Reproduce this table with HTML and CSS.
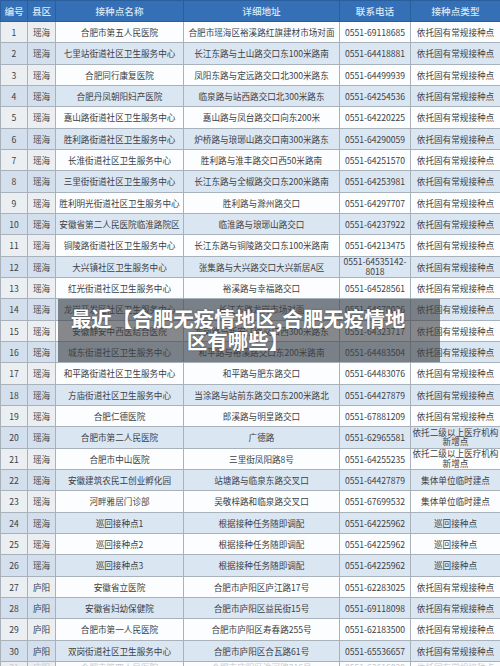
FILE: index.html
```html
<!DOCTYPE html>
<html lang="zh-CN">
<head>
<meta charset="utf-8">
<title>合肥接种点</title>
<link rel="stylesheet" href="styles.css">
</head>
<body>
<div class="page">
<table class="grid">
<colgroup>
<col class="c1"><col class="c2"><col class="c3"><col class="c4"><col class="c5"><col class="c6">
</colgroup>
<thead>
<tr><th>编号</th><th>县区</th><th>接种点名称</th><th>详细地址</th><th>联系电话</th><th>接种点类型</th></tr>
</thead>
<tbody>
<tr><td>1</td><td>瑶海</td><td>合肥市第五人民医院</td><td>合肥市瑶海区裕溪路红旗建材市场对面</td><td>0551-69118685</td><td>依托固有常规接种点</td></tr>
<tr><td>2</td><td>瑶海</td><td>七里站街道社区卫生服务中心</td><td>长江东路与土山路交口东100米路南</td><td>0551-64418881</td><td>依托固有常规接种点</td></tr>
<tr><td>3</td><td>瑶海</td><td>合肥同行康复医院</td><td>凤阳东路与定远路交口北300米路东</td><td>0551-64499939</td><td>依托固有常规接种点</td></tr>
<tr><td>4</td><td>瑶海</td><td>合肥丹凤朝阳妇产医院</td><td>临泉路与站西路交口北300米路东</td><td>0551-64254536</td><td>依托固有常规接种点</td></tr>
<tr><td>5</td><td>瑶海</td><td>嘉山路街道社区卫生服务中心</td><td>嘉山路与凤台路交口向东200米</td><td>0551-64220225</td><td>依托固有常规接种点</td></tr>
<tr><td>6</td><td>瑶海</td><td>胜利路街道社区卫生服务中心</td><td>炉桥路与琅琊山路交口南300米路东</td><td>0551-64290059</td><td>依托固有常规接种点</td></tr>
<tr><td>7</td><td>瑶海</td><td>长淮街道社区卫生服务中心</td><td>胜利路与淮丰路交口西50米路南</td><td>0551-64251570</td><td>依托固有常规接种点</td></tr>
<tr><td>8</td><td>瑶海</td><td>三里街街道社区卫生服务中心</td><td>长江东路与全椒路交口东200米路南</td><td>0551-64253981</td><td>依托固有常规接种点</td></tr>
<tr><td>9</td><td>瑶海</td><td>胜利明光街道社区卫生服务中心</td><td>胜利路与滁州路交口</td><td>0551-64297707</td><td>依托固有常规接种点</td></tr>
<tr><td>10</td><td>瑶海</td><td>安徽省第二人民医院临淮路院区</td><td>临淮路与琅琊山路交口</td><td>0551-64237922</td><td>依托固有常规接种点</td></tr>
<tr><td>11</td><td>瑶海</td><td>铜陵路街道社区卫生服务中心</td><td>长江东路与铜陵路交口东100米路南</td><td>0551-64213475</td><td>依托固有常规接种点</td></tr>
<tr><td>12</td><td>瑶海</td><td>大兴镇社区卫生服务中心</td><td>张集路与大兴路交口大兴新居A区</td><td class="wrap">0551-64535142-<br>8018</td><td>依托固有常规接种点</td></tr>
<tr><td>13</td><td>瑶海</td><td>红光街道社区卫生服务中心</td><td>裕溪路与幸福路交口</td><td>0551-64528561</td><td>依托固有常规接种点</td></tr>
<tr><td>14</td><td>瑶海</td><td>龙岗开发区社区卫生服务中心</td><td>长江东路龙岗市场对面</td><td>0551-64670026</td><td>依托固有常规接种点</td></tr>
<tr><td>15</td><td>瑶海</td><td>安徽静安中西医结合医院</td><td>龙岗路与新安江路交口西300米路东</td><td>0551-64323717</td><td>依托固有常规接种点</td></tr>
<tr><td>16</td><td>瑶海</td><td>城东街道社区卫生服务中心</td><td>和平路与裕溪路交口东200米路南</td><td>0551-64483504</td><td>依托固有常规接种点</td></tr>
<tr><td>17</td><td>瑶海</td><td>和平路街道社区卫生服务中心</td><td>和平路与肥东路交口</td><td>0551-64483076</td><td>依托固有常规接种点</td></tr>
<tr><td>18</td><td>瑶海</td><td>方庙街道社区卫生服务中心</td><td>当涂路与站前东路交口东200米路北</td><td>0551-64427879</td><td>依托固有常规接种点</td></tr>
<tr><td>19</td><td>瑶海</td><td>合肥仁德医院</td><td>郎溪路与明皇路交口</td><td>0551-67881209</td><td>依托固有常规接种点</td></tr>
<tr><td>20</td><td>瑶海</td><td>合肥市第二人民医院</td><td>广德路</td><td>0551-62965581</td><td class="wrap">依托二级以上医疗机构<br>新增点</td></tr>
<tr><td>21</td><td>瑶海</td><td>合肥市中山医院</td><td>三里街凤阳路8号</td><td>0551-64255235</td><td class="wrap">依托二级以上医疗机构<br>新增点</td></tr>
<tr><td>22</td><td>瑶海</td><td>安徽建筑农民工创业孵化园</td><td>站塘路与临泉东路交叉口</td><td>0551-64427879</td><td>集体单位临时建点</td></tr>
<tr><td>23</td><td>瑶海</td><td>河畔雅居门诊部</td><td>吴敬梓路和临泉路交叉口</td><td>0551-67699532</td><td>集体单位临时建点</td></tr>
<tr><td>24</td><td>瑶海</td><td>巡回接种点1</td><td>根据接种任务随即调配</td><td>0551-64225962</td><td>巡回接种点</td></tr>
<tr><td>25</td><td>瑶海</td><td>巡回接种点2</td><td>根据接种任务随即调配</td><td>0551-64225962</td><td>巡回接种点</td></tr>
<tr><td>26</td><td>瑶海</td><td>巡回接种点3</td><td>根据接种任务随即调配</td><td>0551-64225962</td><td>巡回接种点</td></tr>
<tr><td>27</td><td>庐阳</td><td>安徽省立医院</td><td>合肥市庐阳区庐江路17号</td><td>0551-62283025</td><td>依托固有常规接种点</td></tr>
<tr><td>28</td><td>庐阳</td><td>安徽省妇幼保健院</td><td>合肥市庐阳区益民街15号</td><td>0551-69118098</td><td>依托固有常规接种点</td></tr>
<tr><td>29</td><td>庐阳</td><td>合肥市第一人民医院</td><td>合肥市庐阳区寿春路255号</td><td>0551-62183500</td><td>依托固有常规接种点</td></tr>
<tr><td>30</td><td>庐阳</td><td>双岗街道社区卫生服务中心</td><td>合肥市庐阳区合瓦路61号</td><td>0551-65536657</td><td>依托固有常规接种点</td></tr>
<tr class="partial"><td>31</td><td>庐阳</td><td>合肥市第四人民医院</td><td>合肥市庐阳区淮河路316号</td><td>0551-63616029</td><td>依托固有常规接种点</td></tr>
</tbody>
</table>
<div class="caption">
<p class="caption-text">最近【合肥无疫情地区,合肥无疫情地<br>区有哪些】</p>
</div>
</div>
</body>
</html>
```
FILE: styles.css
```css
html, body {
  margin: 0;
  padding: 0;
  background: #ffffff;
}
body {
  width: 500px;
  height: 666px;
  overflow: hidden;
  font-family: "Noto Sans CJK SC", "Noto Sans", sans-serif;
}
.page {
  position: relative;
  width: 500px;
  height: 666px;
  overflow: hidden;
}
.grid {
  width: 500px;
  table-layout: fixed;
  border-collapse: collapse;
  color: #3b3f45;
  font-size: 8.6px;
  line-height: 10px;
}
.c1 { width: 27px; }
.c2 { width: 28px; }
.c3 { width: 128px; }
.c4 { width: 156px; }
.c5 { width: 71px; }
.c6 { width: 90px; }
.grid th {
  height: 20px;
  padding: 0;
  background: #3570b6;
  color: #d9e8f7;
  font-weight: 500;
  font-size: 9.6px;
  border: 1px solid #2a5f9e;
  text-align: center;
}
.grid td {
  height: 20.33px;
  padding: 0;
  border: 1px solid #a9b1ba;
  text-align: center;
  white-space: nowrap;
  overflow: hidden;
  background: #fcfdfe;
}
.grid tbody tr:nth-child(even) td {
  background: #dbe6f3;
}
.grid tbody td:nth-child(1),
.grid tbody td:nth-child(2) {
  background: #eceff2;
}
.grid tbody tr:nth-child(even) td:nth-child(1),
.grid tbody tr:nth-child(even) td:nth-child(2) {
  background: #d3dfec;
}
.grid td.wrap {
  white-space: normal;
  line-height: 9.5px;
}
.grid tr.partial td {
  vertical-align: top;
  color: #c8ccd2;
}
.caption {
  position: absolute;
  left: 58px;
  top: 299px;
  width: 382px;
  height: 63px;
  background: rgba(62, 64, 68, 0.62);
  box-sizing: border-box;
  padding: 8px 22px 0 0;
}
.caption-text {
  margin: 0;
  color: #ffffff;
  font-weight: 700;
  font-size: 20.5px;
  line-height: 22px;
  text-align: center;
  white-space: nowrap;
  text-shadow: 0 0 2px rgba(0,0,0,0.4);
}
```
